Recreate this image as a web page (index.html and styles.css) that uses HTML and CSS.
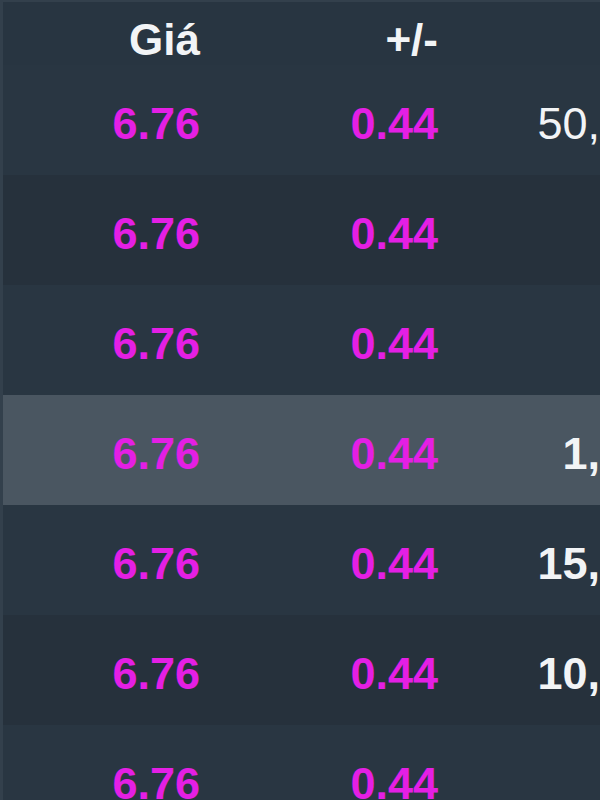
FILE: index.html
```html
<!DOCTYPE html>
<html lang="vi">
<head>
<meta charset="utf-8">
<title>Bảng giá</title>
<link rel="stylesheet" href="styles.css">
</head>
<body>
<div class="table">
  <div class="head">
    <div class="cell">Giá</div>
    <div class="cell">+/-</div>
    <div class="cell"></div>
  </div>
  <div class="row light">
    <div class="cell up">6.76</div>
    <div class="cell up">0.44</div>
    <div class="cell vol thin">50,</div>
  </div>
  <div class="row dark">
    <div class="cell up">6.76</div>
    <div class="cell up">0.44</div>
    <div class="cell vol"></div>
  </div>
  <div class="row light">
    <div class="cell up">6.76</div>
    <div class="cell up">0.44</div>
    <div class="cell vol"></div>
  </div>
  <div class="row active">
    <div class="cell up">6.76</div>
    <div class="cell up">0.44</div>
    <div class="cell vol">1,</div>
  </div>
  <div class="row light">
    <div class="cell up">6.76</div>
    <div class="cell up">0.44</div>
    <div class="cell vol">15,</div>
  </div>
  <div class="row dark">
    <div class="cell up">6.76</div>
    <div class="cell up">0.44</div>
    <div class="cell vol">10,</div>
  </div>
  <div class="row light">
    <div class="cell up">6.76</div>
    <div class="cell up">0.44</div>
    <div class="cell vol"></div>
  </div>
</div>
</body>
</html>
```

FILE: styles.css
```css
html, body {
  margin: 0;
  padding: 0;
  width: 600px;
  height: 800px;
  overflow: hidden;
  background: #283541;
}

body {
  font-family: "Liberation Sans", Arial, sans-serif;
  font-weight: bold;
  color: #f2f4f6;
}

.table {
  width: 600px;
  box-sizing: border-box;
  border-left: 3px solid #33404c;
  border-top: 2px solid #33404c;
}

.head,
.row {
  display: grid;
  grid-template-columns: 197px 238px 1fr;
  box-sizing: border-box;
}

.head {
  height: 63px;
  padding-top: 13px;
  font-size: 44px;
  background: #283541;
}

.row {
  height: 110px;
  padding-top: 8px;
  align-items: center;
  font-size: 45px;
}

.cell {
  text-align: right;
  white-space: nowrap;
}

.light { background: #293642; }
.dark { background: #26313c; }
.active { background: #4a5661; }

.up {
  color: #e41fe4;
}

.vol {
  color: #f2f4f6;
}

.thin {
  font-weight: normal;
}
```
